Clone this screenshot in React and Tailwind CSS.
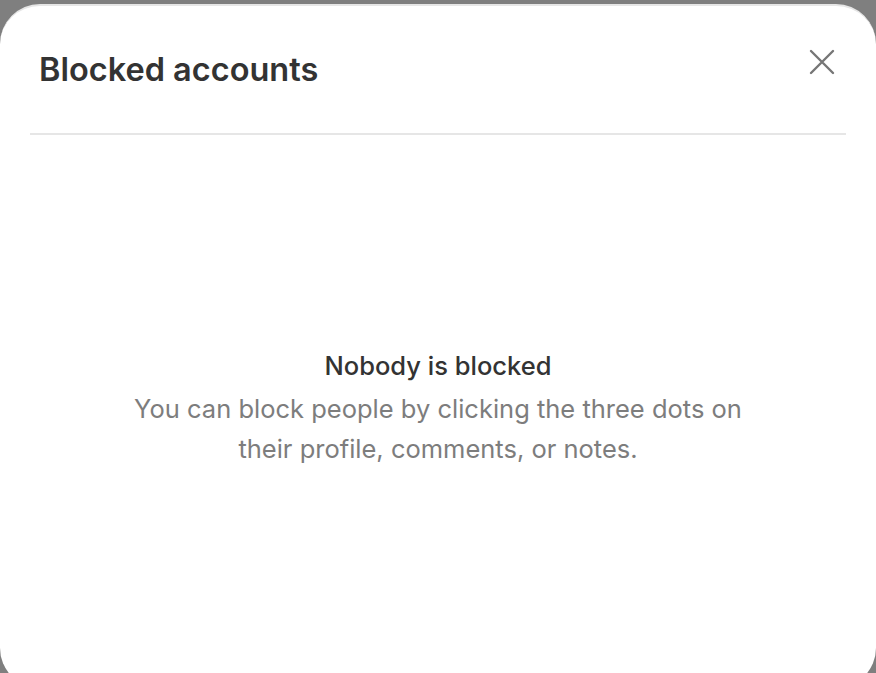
const App = () => {
  return (
    <div className="h-[673px] w-[876px] overflow-hidden bg-[#7f7f7f] pt-[4px]" style={{ fontFamily: 'Inter, "Noto Sans", sans-serif' }}>
      <div className="flex h-[684px] flex-col rounded-[40px] border-t-2 border-[#e6e6e6] bg-white">
        <div className="flex items-start justify-between px-[30px]">
          <h1 className="pl-[9px] pt-[44px] text-[32.5px] font-semibold leading-[40px] text-[#333]">Blocked accounts</h1>
          <button className="mr-[11px] mt-[43px] text-[#767676]" type="button">
            <svg width="26" height="26" viewBox="0 0 26 26" fill="none" stroke="currentColor" strokeWidth="2.4" strokeLinecap="round">
              <path d="M2 2L24 24M24 2L2 24" />
            </svg>
          </button>
        </div>
        <div className="mx-[30px] mt-[43px] h-[2px] bg-[#e6e6e6]" />
        <div className="flex flex-col items-center pt-[214px] text-center">
          <p className="text-[25.5px] font-medium leading-[34px] text-[#333]">Nobody is blocked</p>
          <p className="mt-[6px] w-[640px] text-[25.5px] leading-[40px] text-[#7d7d7d]">
            You can block people by clicking the three dots on their profile, comments, or notes.
          </p>
        </div>
      </div>
    </div>
  );
};

export default App;
